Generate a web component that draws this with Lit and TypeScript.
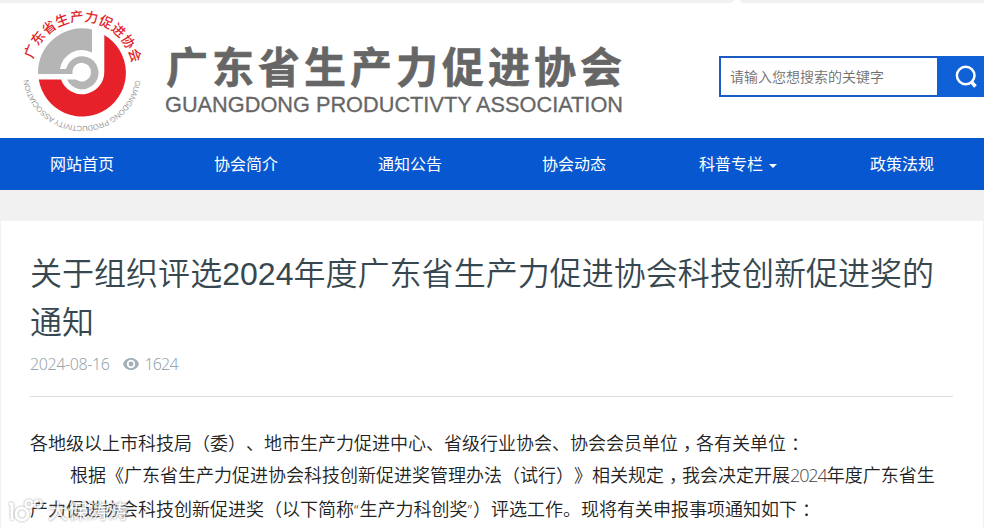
import { LitElement, html, css } from "lit";
import { customElement } from "lit/decorators.js";

@customElement("site-header")
class SiteHeader extends LitElement {
  static styles = css`
    :host {
      display: block;
      background: #fff;
    }
    .strip {
      height: 3px;
      background: #f1f1f1;
    }
    .notch {
      display: block;
      width: 12px;
      height: 3px;
      margin-left: 731px;
      background: #fff;
      clip-path: polygon(0 100%, 35% 0, 65% 0, 100% 100%);
    }
    .bar {
      display: flex;
      align-items: center;
      justify-content: space-between;
      height: 135px;
    }
    .brand {
      display: block;
      width: 640px;
      height: 135px;
    }
    .cn {
      font-family: "Noto Sans CJK SC", sans-serif;
      font-weight: 700;
    }
    .ring {
      font-weight: 500;
    }
    .en {
      font-family: "Liberation Sans", Arial, sans-serif;
    }
    .search {
      display: flex;
      width: 265px;
      height: 41px;
      margin-top: 12px;
    }
    input {
      box-sizing: border-box;
      width: 219px;
      height: 41px;
      padding: 0 9px;
      border: 2px solid #1a5bc4;
      border-right-width: 1px;
      outline: none;
      font: 350 14px "Liberation Sans", "Noto Sans CJK SC", sans-serif;
      background: #fff;
    }
    input::placeholder {
      color: #707070;
    }
    button {
      display: flex;
      width: 46px;
      height: 41px;
      padding: 0 0 0 17px;
      align-items: center;
      border: 0;
      background: #1060d8;
    }
  `;

  render() {
    return html`
      <div class="strip"><span class="notch"></span></div>
      <div class="bar">
        <svg class="brand" viewBox="0 3 640 135">
          <defs>
            <path id="bottom" d="M136 72A54 54 0 0 1 28 72" />
            <path id="lead" d="M35.2 90.9A50.5 50.5 0 1 1 128.8 90.9" />
          </defs>
          <path
            fill="#b5b5b5"
            d="M38 74A44 44 0 0 1 92 29.5V52.5A22 22 0 0 0 60 69H66A16.5 16.5 0 1 1 67 79.5H76A9.3 9.3 0 1 0 72.6 74Z"
          />
          <path
            fill="#e62129"
            d="M38.8 79.5H61A22.3 22.3 0 0 0 104.3 72V35A43.8 43.8 0 1 1 38.8 79.5Z"
          />
          <text class="cn ring" font-size="13.5" fill="#e0262c">
            <textPath href="#lead" startOffset="32" textLength="137">广东省生产力促进协会</textPath>
          </text>
          <text class="en" font-size="7.6" fill="#999">
            <textPath href="#bottom" startOffset="8" textLength="154">GUANGDONG PRODUCTIVITY ASSOCIATION</textPath>
          </text>
          <text class="cn" x="166" y="82.5" font-size="42" fill="#666" stroke="#666" stroke-width=".6" textLength="456">广东省生产力促进协会</text>
          <text class="en" x="165" y="112" font-size="22" fill="#666" stroke="#666" stroke-width=".3" textLength="458" lengthAdjust="spacingAndGlyphs">GUANGDONG PRODUCTIVTY ASSOCIATION</text>
        </svg>
        <div class="search">
          <input type="text" placeholder="请输入您想搜索的关键字" />
          <button aria-label="搜索">
            <svg width="24" height="24" viewBox="0 0 24 24" fill="none" stroke="#fff">
              <circle cx="10.7" cy="10.5" r="8.8" stroke-width="2.5" />
              <path d="M16.5 17L20.5 21.5" stroke-width="3.5" />
            </svg>
          </button>
        </div>
      </div>
    `;
  }
}

@customElement("site-nav")
class SiteNav extends LitElement {
  static styles = css`
    :host {
      display: grid;
      grid-template-columns: repeat(6, 1fr);
      height: 52px;
      background: #0757d0;
      font: 16px "Noto Sans CJK SC", sans-serif;
      color: #fff;
    }
    a {
      display: flex;
      align-items: center;
      justify-content: center;
      padding-bottom: 2px;
    }
    .caret {
      margin: 5px 0 0 6px;
      border-top: 4px solid #fff;
      border-left: 4px solid transparent;
      border-right: 4px solid transparent;
    }
  `;

  items = [
    { label: "网站首页" },
    { label: "协会简介" },
    { label: "通知公告" },
    { label: "协会动态" },
    { label: "科普专栏", menu: true },
    { label: "政策法规" },
  ];

  render() {
    return this.items.map(
      (item) => html`<a>${item.label}${item.menu ? html`<span class="caret"></span>` : ""}</a>`
    );
  }
}

@customElement("app-root")
class AppRoot extends LitElement {
  static styles = css`
    :host {
      display: block;
      position: relative;
      box-sizing: border-box;
      height: 528px;
      overflow: hidden;
      background: #f1f1f1;
      font-family: "Noto Sans CJK SC", sans-serif;
    }
    .article {
      height: 400px;
      margin: 31px 1px 0;
      padding: 29px 30px 0 29px;
      background: #fff;
    }
    h1 {
      margin: 0;
      font: 350 32px/49px "Liberation Sans", "Noto Sans CJK SC", sans-serif;
      letter-spacing: 0.03px;
      color: #37474f;
    }
    .meta {
      display: flex;
      align-items: center;
      height: 32px;
      font: 300 16px "Noto Sans", "Open Sans", sans-serif;
      letter-spacing: -0.4px;
      color: #98a5ad;
    }
    .eye {
      margin: 0 5px 0 14px;
    }
    .views {
      letter-spacing: -0.8px;
    }
    .content {
      margin-top: 16px;
      padding-top: 29px;
      border-top: 1px solid #ddd;
      font-size: 18px;
      line-height: 32.3px;
      font-weight: 350;
      color: #222;
      white-space: nowrap;
      text-spacing-trim: space-all;
    }
    p {
      margin: 0;
    }
    .indent {
      padding-left: 40px;
    }
    .mid {
      padding-left: 5px;
      margin-right: -5px;
    }
    .num {
      font-family: "Open Sans", sans-serif;
      font-weight: 300;
      letter-spacing: -1.1px;
      color: #444;
    }
    .quote {
      font-family: "Open Sans", sans-serif;
      font-size: 15px;
      line-height: 1;
      font-weight: 300;
      letter-spacing: 1px;
    }
    .watermark {
      position: absolute;
      left: 8px;
      bottom: 3px;
      display: flex;
      align-items: center;
      gap: 3px;
      font-size: 20px;
      line-height: 28px;
      color: #fff;
      opacity: 0.8;
      text-shadow: 0 0 2px #888, 0 0 3px #aaa;
    }
    .watermark svg {
      filter: drop-shadow(0 0 1px #888);
    }
  `;

  render() {
    return html`
      <site-header></site-header>
      <site-nav></site-nav>
      <div class="article">
        <h1>关于组织评选2024年度广东省生产力促进协会科技创新促进奖的通知</h1>
        <div class="meta">
          <span>2024-08-16</span>
          <svg class="eye" width="16" height="12" viewBox="0 0 16 12">
            <path
              fill="#a3afb7"
              fill-rule="evenodd"
              d="M8 0C4 0 1.2 2.5 0 6C1.2 9.5 4 12 8 12S14.8 9.5 16 6C14.8 2.5 12 0 8 0ZM8 1.8A4.2 4.2 0 1 1 8 10.2A4.2 4.2 0 1 1 8 1.8Z"
            />
            <circle cx="8" cy="6" r="2.4" fill="#a3afb7" />
          </svg>
          <span class="views">1624</span>
        </div>
        <div class="content">
          <p>各地级以上市科技局（委）、地市生产力促进中心、省级行业协会、协会会员单位<span class="mid">，</span>各有关单位<span class="mid">：</span></p>
          <p class="indent">根据《广东省生产力促进协会科技创新促进奖管理办法（试行）》相关规定<span class="mid">，</span>我会决定开展<span class="num">2024</span>年度广东省生</p>
          <p>产力促进协会科技创新促进奖（以下简称<span class="quote">“</span>生产力科创奖<span class="quote">”</span>）评选工作。现将有关申报事项通知如下<span class="mid">：</span></p>
        </div>
      </div>
      <div class="watermark">
        <svg width="37" height="26" viewBox="0 0 37 26" fill="none" stroke="#fff" stroke-width="3">
          <path d="M1 6H4V22" />
          <circle cx="14" cy="16" r="6" />
          <circle cx="21" cy="6" r="3.5" stroke-width="2.5" />
          <circle cx="30" cy="6" r="3.5" stroke-width="2.5" />
        </svg>
        <span>大保涛涛</span>
      </div>
    `;
  }
}
